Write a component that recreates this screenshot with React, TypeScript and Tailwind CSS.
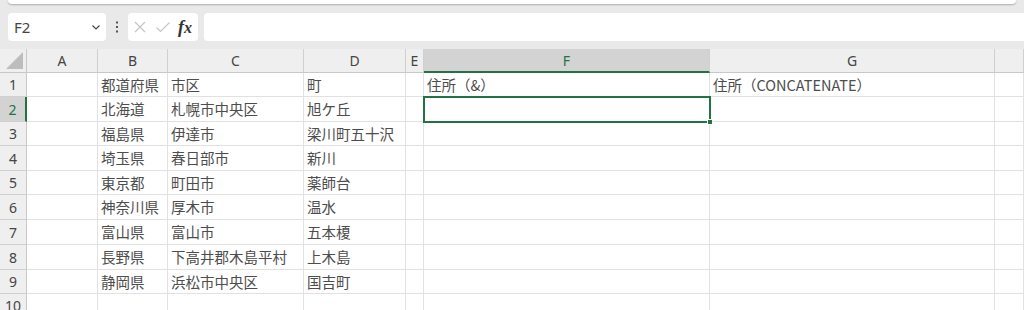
import React from 'react';

const FONT = { fontFamily: '"Noto Sans CJK JP", "Noto Sans", sans-serif' };

// column widths: row header, A..G, rest
const colW = ['w-[27px]', 'w-[71px]', 'w-[70px]', 'w-[136px]', 'w-[102px]', 'w-[18px]', 'w-[286px]', 'w-[285px]', 'flex-1'];
const letters = ['A', 'B', 'C', 'D', 'E', 'F', 'G', ''];
const rowH = ['h-[24px]', 'h-[25px]', 'h-[24px]', 'h-[25px]', 'h-[24px]', 'h-[25px]', 'h-[25px]', 'h-[25px]', 'h-[24px]', 'h-[24px]'];

const data: string[][] = [
    ['', '都道府県', '市区', '町', '', '住所（&）', '住所（CONCATENATE）', ''],
    ['', '北海道', '札幌市中央区', '旭ケ丘', '', '', '', ''],
    ['', '福島県', '伊達市', '梁川町五十沢', '', '', '', ''],
    ['', '埼玉県', '春日部市', '新川', '', '', '', ''],
    ['', '東京都', '町田市', '薬師台', '', '', '', ''],
    ['', '神奈川県', '厚木市', '温水', '', '', '', ''],
    ['', '富山県', '富山市', '五本榎', '', '', '', ''],
    ['', '長野県', '下高井郡木島平村', '上木島', '', '', '', ''],
    ['', '静岡県', '浜松市中央区', '国吉町', '', '', '', ''],
    ['', '', '', '', '', '', '', ''],
];

function FormulaBar() {
    return (
        <div className="flex h-[28px] items-stretch pl-[8px]">
            {/* Name box */}
            <div className="flex w-[98px] items-center justify-between rounded-[4px] bg-white pl-[6px] pr-[4px]">
                <span className="text-[15px] text-[#444]" style={{ fontFamily: '"Noto Sans", sans-serif' }}>F2</span>
                <svg width="12" height="12" viewBox="0 0 12 12" className="text-[#444]">
                    <path d="M2.5 4.5 L6 8 L9.5 4.5" fill="none" stroke="currentColor" strokeWidth="1.2" />
                </svg>
            </div>
            <div className="flex w-[22px] items-center justify-center">
                <svg width="4" height="12" viewBox="0 0 4 12">
                    <rect x="1" y="0.5" width="2" height="2" fill="#555" />
                    <rect x="1" y="5" width="2" height="2" fill="#555" />
                    <rect x="1" y="9.5" width="2" height="2" fill="#555" />
                </svg>
            </div>
            {/* Cancel / enter / fx */}
            <div className="flex w-[70px] items-center rounded-[4px] bg-white pl-[5px]">
                <svg width="14" height="14" viewBox="0 0 14 14">
                    <path d="M2 2 L12 12 M12 2 L2 12" stroke="#c4c4c4" strokeWidth="1.2" fill="none" />
                </svg>
                <svg width="16" height="14" viewBox="0 0 16 14" className="ml-[8px]">
                    <path d="M1.5 7.5 L5.5 11.5 L14.5 2.5" stroke="#c4c4c4" strokeWidth="1.2" fill="none" />
                </svg>
                <span className="ml-[7px] text-[18px] font-bold italic leading-none text-[#333]" style={{ fontFamily: '"Liberation Serif", serif' }}>
                    f<span className="text-[16px]">x</span>
                </span>
            </div>
            <div className="ml-[6px] flex-1 rounded-l-[4px] bg-white" />
        </div>
    );
}

function CornerCell() {
    return (
        <div className={`${colW[0]} flex items-end justify-end border-r border-b border-[#c8c8c8] bg-[#efefef] pr-[3px] pb-[3px]`}>
            <svg width="17" height="17" viewBox="0 0 17 17">
                <path d="M17 0 L17 17 L0 17 Z" fill="#bdbdbd" />
            </svg>
        </div>
    );
}

export default function App() {
    return (
        <div className="h-[310px] w-[1024px] overflow-hidden bg-[#e9e9e9]" style={FONT}>
            {/* Ribbon bottom edge */}
            <div className="mx-[8px] h-[4px] rounded-b-[6px] bg-white shadow-[0_1px_2px_rgba(0,0,0,0.25)]" />
            <div className="mt-[9px]">
                <FormulaBar />
            </div>

            {/* Sheet */}
            <div className="relative mt-[8px] bg-white">
                {/* Column headers */}
                <div className="flex h-[24px]">
                    <CornerCell />
                    {letters.map((l, i) => {
                        const active = l === 'F';
                        return (
                            <div
                                key={i}
                                className={`${colW[i + 1]} flex items-center justify-center text-[14px] ${
                                    active
                                        ? 'border-r border-b-2 border-r-[#d0d0d0] border-b-[#217346] bg-[#d3d3d3] text-[#217346]'
                                        : 'border-r border-b border-r-[#d0d0d0] border-b-[#c8c8c8] bg-[#efefef] text-[#444]'
                                }`}
                                style={{ fontFamily: '"Noto Sans", sans-serif' }}
                            >
                                {l}
                            </div>
                        );
                    })}
                </div>

                {/* Rows */}
                {data.map((row, r) => {
                    const active = r === 1;
                    return (
                        <div key={r} className={`flex ${rowH[r]}`}>
                            <div
                                className={`${colW[0]} flex items-center justify-center text-[14px] ${
                                    active
                                        ? 'border-r-2 border-b border-r-[#217346] border-b-[#d0d0d0] bg-[#d3d3d3] text-[#217346]'
                                        : 'border-r border-b border-r-[#c8c8c8] border-b-[#d0d0d0] bg-[#efefef] text-[#444]'
                                }`}
                                style={{ fontFamily: '"Noto Sans", sans-serif' }}
                            >
                                {r + 1}
                            </div>
                            {row.map((v, c) => (
                                <div
                                    key={c}
                                    className={`${colW[c + 1]} flex items-center overflow-visible whitespace-nowrap border-r border-b border-[#e1e1e1] pl-[3px] text-[14.5px] text-[#4d4d4d]`}
                                >
                                    {v}
                                </div>
                            ))}
                        </div>
                    );
                })}

                {/* Active cell F2 */}
                <div className="absolute left-[423px] top-[47px] h-[27px] w-[288px] border-2 border-[#217346]">
                    <div className="absolute -right-[4px] -bottom-[4px] h-[6px] w-[6px] border border-white bg-[#217346]" />
                </div>
            </div>
        </div>
    );
}
